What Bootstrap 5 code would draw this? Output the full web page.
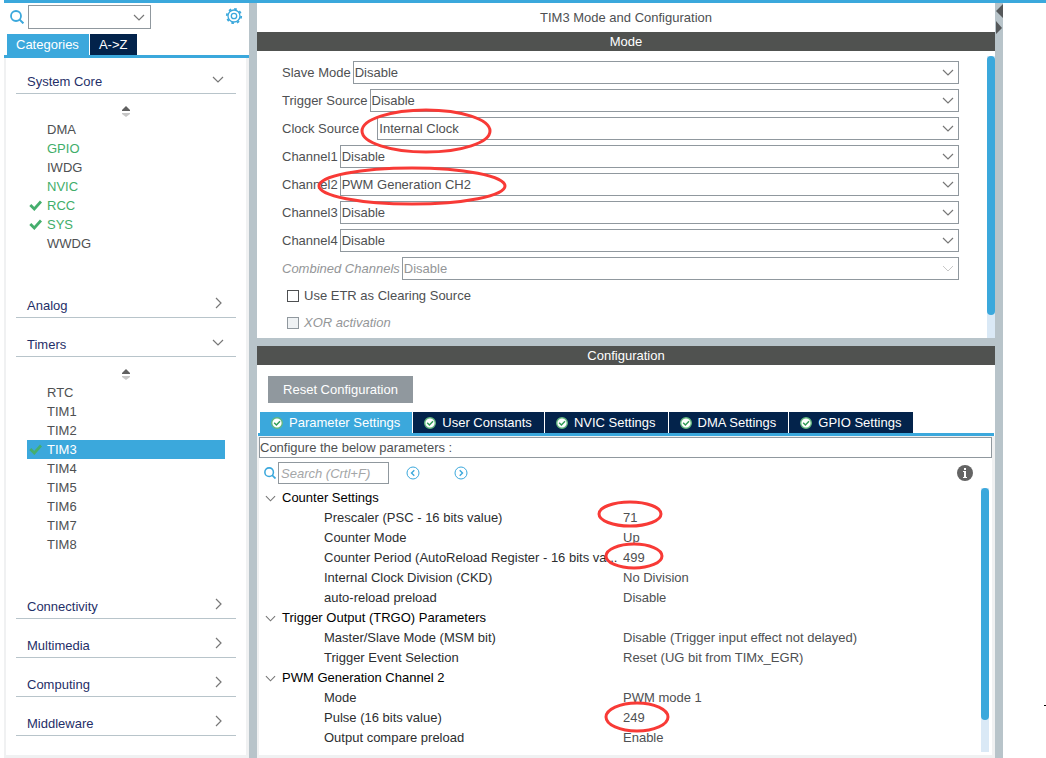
<!DOCTYPE html>
<html lang="en">
<head>
<meta charset="utf-8">
<meta name="viewport" content="width=device-width, initial-scale=1">
<title>TIM3 Mode and Configuration</title>
<link href="https://cdn.jsdelivr.net/npm/bootstrap@5.3.0/dist/css/bootstrap.min.css" rel="stylesheet">
<style>
  :root { --sky: #3ba8dc; --navy: #03234b; --steel: #b8c4ca; --edge: #90989e; --slate: #505250; --haze: #f0f1f2; }
  body { font-family: "Liberation Sans", Arial, sans-serif; font-size: 13px; line-height: 19px; color: #4e5052; background: #fff; }
  svg { display: block; flex: none; }
  .frame { margin-left: 4px; border-top: 3px solid var(--sky); }
  .sidebar { width: 245px; flex: none; }
  .splitter { width: 8px; flex: none; background: var(--steel); }
  .splitter-h { height: 8px; background: var(--steel); }
  .gutter { width: 43px; flex: none; }
  .gutter-mark { width: 2px; height: 1px; background: #000; margin-bottom: 52px; }

  .box, .form-select.box { border: 1px solid var(--edge); border-radius: 0; background-color: #fff; color: inherit; font-size: 13px; line-height: 19px; padding: 0 2px; min-width: 0; }
  .form-select.box { height: 23px; padding: 0 20px 0 1px; background-size: 12px 7px; background-position: right 4px center;
    background-image: url("data:image/svg+xml,%3Csvg xmlns='http://www.w3.org/2000/svg' viewBox='0 0 12 7'%3E%3Cpath d='M1 1l5 5 5-5' fill='none' stroke='%23777' stroke-width='1.2'/%3E%3C/svg%3E"); }
  .form-select.box:disabled { color: #949698; opacity: 1;
    background-image: url("data:image/svg+xml,%3Csvg xmlns='http://www.w3.org/2000/svg' viewBox='0 0 12 7'%3E%3Cpath d='M1 1l5 5 5-5' fill='none' stroke='%23c8c8c8'/%3E%3C/svg%3E"); }

  .finder { height: 31px; padding: 2px 6px 0 6px; }
  .finder .form-select.box { width: 123px; height: 24px; background-position: right 5px center; }
  .gear { margin-top: 2px; }
  .tabs { gap: 1px; border-bottom: 3px solid var(--sky); }
  .tabs .nav-link { height: 21px; padding: 1px 10px 0 9px; border-radius: 0; background: var(--navy); color: #fff; }
  .tabs .nav-link.active { background: var(--sky); color: #fff; }
  .side-tabs { padding-left: 3px; }
  .tree { border: solid var(--haze); border-width: 0 3px 3px 2px; padding: 0 10px 19px; }
  .group-head { display: flex; justify-content: space-between; align-items: flex-end; height: 39px; width: 100%; padding: 0 12px 2px 11px; border: 0; border-bottom: 1px solid var(--steel); background: none; color: #1f2f68; text-align: left; }
  .group-head.first { height: 36px; }
  .group-head svg { margin-bottom: 6px; }
  .group-head svg.open { margin-bottom: 8px; }
  .group-body { padding: 0 11px 26px; }
  .sorter { height: 26px; padding-top: 12px; }
  .entry { display: flex; align-items: center; height: 19px; color: inherit; text-decoration: none; }
  .entry .tick { width: 20px; padding-left: 2px; }
  .entry.ok { color: #3fae6a; }
  .entry.chosen { background: var(--sky); color: #fff; }

  .title-row { height: 29px; }
  .bar { height: 19px; background: var(--slate); color: #fff; text-align: center; }
  .mode-form { padding: 10px 28px 2px 25px; }
  .mode-row { display: flex; align-items: center; gap: 2px; height: 23px; margin-bottom: 5px; position: relative; }
  .mode-row label { white-space: nowrap; }
  .dim { color: #949698; font-style: italic; }
  .check-row { display: flex; align-items: center; gap: 5px; height: 27px; padding-left: 5px; }
  .form-check-input.tickbox { width: 12px; height: 12px; margin: 0; border: 1px solid #4e5052; border-radius: 0; background-color: #fff; }
  .form-check-input.tickbox:disabled { border-color: var(--edge); background-color: #eff2f4; opacity: 1; }
  .form-check-input.tickbox:disabled ~ label { opacity: 1; }
  .checks { margin-top: -3px; }
  .scroller { width: 8px; flex: none; background: #dae9f6; }
  .scroller div { background: var(--sky); border-radius: 4px; }
  .mode-scroll { margin-top: 5px; }
  .mode-scroll div { height: 92%; }
  .param-scroll { margin: 0 3px 3px 0; }
  .param-scroll div { height: 88%; }

  .reset { margin: 11px 0 9px 11px; width: 145px; height: 27px; border: 0; background: #90989e; color: #fff; }
  .config-tabs { margin: 0 1px; padding-left: 2px; }
  .config-tabs .nav-link { display: flex; align-items: center; gap: 6px; padding: 0 12px 0 11px; }
  .params { border: solid var(--haze); border-width: 1px 3px 3px 2px; }
  .caption-box { width: 100%; height: 21px; padding: 0; display: block; }
  .search-row { height: 30px; padding: 0 19px 0 5px; }
  .search-row .box { width: 111px; height: 22px; margin-left: 2px; }
  .box::placeholder { color: #a4a6a8; font-style: italic; opacity: 1; }
  .icon-btn { border: 0; padding: 0; background: none; }
  .ptable { table-layout: fixed; width: 100%; line-height: 20px; margin-bottom: 7px; }
  .ptable th, .ptable td { height: 20px; padding: 0; font-weight: 400; }
  .ptable .head th { color: #000; }
  .ptable .head span { display: flex; align-items: center; gap: 6px; padding-left: 6px; }
  .ptable .pname { padding: 0 0 0 65px; color: #2c2e30; white-space: nowrap; }
  .ptable td { position: relative; }
  .ring { position: absolute; z-index: 1; pointer-events: none; overflow: visible; }
  .ring ellipse { fill: none; stroke: #f83a36; stroke-width: 3; }
  .ring-clock { left: 79px; top: -8px; }
  .ring-pwm { left: 35px; top: -6px; }
  .ring-psc { left: -25px; top: -6px; }
  .ring-arr { left: -18px; top: -4px; }
  .ring-pulse { left: -19px; top: -5px; }
</style>
</head>
<body>
<svg class="d-none">
  <symbol id="down" viewBox="0 0 12 7"><path d="M1 1l5 5 5-5" fill="none" stroke="#777" stroke-width="1.200"/></symbol>
  <symbol id="right" viewBox="0 0 12 12"><path d="M4 1l5 5-5 5" fill="none" stroke="#777" stroke-width="1.200"/></symbol>
  <symbol id="sort" viewBox="0 0 10 11"><path d="M5 0l4 4v1H1V4z" fill="#606060"/><path d="M1 7h8v1L5 11 1 8z" fill="#c6c6c6"/></symbol>
  <symbol id="tick" viewBox="0 0 13 11"><path d="M1.300 5l4 4L12 1.500" fill="none" stroke="#45ae6d" stroke-width="2.800"/></symbol>
  <symbol id="lens" viewBox="0 0 14 14"><circle cx="6" cy="6" r="5" fill="none" stroke="#3ba8dc" stroke-width="1.800"/><path d="M9.400 9.400L13.400 13.400" stroke="#3ba8dc" stroke-width="2"/></symbol>
  <symbol id="good" viewBox="0 0 12 12"><circle cx="6" cy="6" r="5.300" fill="#fff" stroke="#63b77f" stroke-width="1.400"/><path d="M3.200 5.800l2.200 2.300 3.600-3.800" fill="none" stroke="#2f9b55" stroke-width="1.400"/></symbol>
</svg>

<div class="frame d-flex min-vh-100">
  <aside class="sidebar d-flex flex-column">
    <div class="finder d-flex align-items-start justify-content-between">
      <div class="d-flex align-items-center gap-1">
        <svg width="14" height="14"><use href="#lens"/></svg>
        <select class="form-select box" aria-label="Find peripheral"><option></option></select>
      </div>
      <button class="icon-btn gear" type="button" aria-label="Settings">
        <svg width="18" height="18" viewBox="0 0 18 18" fill="none" stroke="#3ba8dc"><circle cx="9" cy="9" r="2.700" stroke-width="1.300"/><circle cx="9" cy="9" r="6" stroke-width="1.300"/><circle cx="9" cy="9" r="7.200" stroke-width="1.800" stroke-dasharray="2.600 3.055"/></svg>
      </button>
    </div>
    <nav class="nav tabs side-tabs flex-nowrap">
      <a class="nav-link active" href="#">Categories</a>
      <a class="nav-link" href="#">A-&gt;Z</a>
    </nav>
    <div class="tree flex-grow-1">
      <button class="group-head first" type="button"><span>System Core</span><svg class="open" width="12" height="7"><use href="#down"/></svg></button>
      <div class="group-body">
        <div class="sorter d-flex justify-content-center"><svg width="10" height="11"><use href="#sort"/></svg></div>
        <a class="entry" href="#"><span class="tick"></span>DMA</a>
        <a class="entry ok" href="#"><span class="tick"></span>GPIO</a>
        <a class="entry" href="#"><span class="tick"></span>IWDG</a>
        <a class="entry ok" href="#"><span class="tick"></span>NVIC</a>
        <a class="entry ok" href="#"><span class="tick"><svg width="13" height="11"><use href="#tick"/></svg></span>RCC</a>
        <a class="entry ok" href="#"><span class="tick"><svg width="13" height="11"><use href="#tick"/></svg></span>SYS</a>
        <a class="entry" href="#"><span class="tick"></span>WWDG</a>
      </div>
      <button class="group-head" type="button"><span>Analog</span><svg width="12" height="12"><use href="#right"/></svg></button>
      <button class="group-head" type="button"><span>Timers</span><svg class="open" width="12" height="7"><use href="#down"/></svg></button>
      <div class="group-body">
        <div class="sorter d-flex justify-content-center"><svg width="10" height="11"><use href="#sort"/></svg></div>
        <a class="entry" href="#"><span class="tick"></span>RTC</a>
        <a class="entry" href="#"><span class="tick"></span>TIM1</a>
        <a class="entry" href="#"><span class="tick"></span>TIM2</a>
        <a class="entry chosen" href="#"><span class="tick"><svg width="13" height="11"><use href="#tick"/></svg></span>TIM3</a>
        <a class="entry" href="#"><span class="tick"></span>TIM4</a>
        <a class="entry" href="#"><span class="tick"></span>TIM5</a>
        <a class="entry" href="#"><span class="tick"></span>TIM6</a>
        <a class="entry" href="#"><span class="tick"></span>TIM7</a>
        <a class="entry" href="#"><span class="tick"></span>TIM8</a>
      </div>
      <button class="group-head" type="button"><span>Connectivity</span><svg width="12" height="12"><use href="#right"/></svg></button>
      <button class="group-head" type="button"><span>Multimedia</span><svg width="12" height="12"><use href="#right"/></svg></button>
      <button class="group-head" type="button"><span>Computing</span><svg width="12" height="12"><use href="#right"/></svg></button>
      <button class="group-head" type="button"><span>Middleware</span><svg width="12" height="12"><use href="#right"/></svg></button>
    </div>
  </aside>

  <div class="splitter"></div>

  <main class="d-flex flex-column flex-grow-1">
    <div class="title-row d-flex align-items-center justify-content-center">TIM3 Mode and Configuration</div>
    <div class="bar">Mode</div>
    <section class="d-flex">
      <form class="mode-form flex-grow-1">
        <div class="mode-row"><label for="slave">Slave Mode</label><select id="slave" class="form-select box"><option>Disable</option></select></div>
        <div class="mode-row"><label for="trigger">Trigger Source</label><select id="trigger" class="form-select box"><option>Disable</option></select></div>
        <div class="mode-row"><label for="clock" class="pe-3">Clock Source</label><select id="clock" class="form-select box"><option>Internal Clock</option></select>
          <svg class="ring ring-clock" width="130" height="45"><ellipse cx="65" cy="22" rx="64" ry="21"/></svg></div>
        <div class="mode-row"><label for="ch1">Channel1</label><select id="ch1" class="form-select box"><option>Disable</option></select></div>
        <div class="mode-row"><label for="ch2">Channel2</label><select id="ch2" class="form-select box"><option>PWM Generation CH2</option></select>
          <svg class="ring ring-pwm" width="189" height="38"><ellipse cx="95" cy="19" rx="93" ry="18"/></svg></div>
        <div class="mode-row"><label for="ch3">Channel3</label><select id="ch3" class="form-select box"><option>Disable</option></select></div>
        <div class="mode-row"><label for="ch4">Channel4</label><select id="ch4" class="form-select box"><option>Disable</option></select></div>
        <div class="mode-row"><label for="combined" class="dim">Combined Channels</label><select id="combined" class="form-select box" disabled><option>Disable</option></select></div>
        <div class="checks">
          <div class="check-row"><input class="form-check-input tickbox" type="checkbox" id="etr"><label for="etr">Use ETR as Clearing Source</label></div>
          <div class="check-row"><input class="form-check-input tickbox" type="checkbox" id="xor" disabled><label for="xor" class="dim">XOR activation</label></div>
        </div>
      </form>
      <div class="scroller mode-scroll"><div></div></div>
    </section>

    <div class="splitter-h"></div>
    <div class="bar">Configuration</div>
    <section class="d-flex flex-column flex-grow-1">
      <div class="d-flex"><button class="reset" type="button">Reset Configuration</button></div>
      <nav class="nav tabs config-tabs flex-nowrap">
        <a class="nav-link active" href="#"><svg width="12" height="12"><use href="#good"/></svg>Parameter Settings</a>
        <a class="nav-link" href="#"><svg width="12" height="12"><use href="#good"/></svg>User Constants</a>
        <a class="nav-link" href="#"><svg width="12" height="12"><use href="#good"/></svg>NVIC Settings</a>
        <a class="nav-link" href="#"><svg width="12" height="12"><use href="#good"/></svg>DMA Settings</a>
        <a class="nav-link" href="#"><svg width="12" height="12"><use href="#good"/></svg>GPIO Settings</a>
      </nav>
      <div class="params d-flex flex-column flex-grow-1">
        <input class="box caption-box" type="text" value="Configure the below parameters :" aria-label="Instructions" readonly>
        <div class="search-row d-flex align-items-center">
          <svg width="12" height="12" viewBox="0 0 14 14"><use href="#lens" width="14" height="14"/></svg>
          <input class="box" type="search" placeholder="Search (Crtl+F)" aria-label="Search parameters">
          <button class="icon-btn ms-3" type="button" aria-label="Previous"><svg width="16" height="16" fill="none" stroke="#3ba8dc"><circle cx="8" cy="8" r="6"/><path d="M9.300 5.200L6.500 8l2.800 2.800" stroke-width="1.400"/></svg></button>
          <button class="icon-btn ms-3 ps-3" type="button" aria-label="Next"><svg width="16" height="16" fill="none" stroke="#3ba8dc"><circle cx="8" cy="8" r="6"/><path d="M6.700 5.200L9.500 8l-2.800 2.800" stroke-width="1.400"/></svg></button>
          <button class="icon-btn ms-auto" type="button" aria-label="Information"><svg width="16" height="16"><circle cx="8" cy="8" r="8" fill="#646464"/><path d="M7 3h2v2H7zM6 6h3v6h1v1H6v-1h1V7H6z" fill="#fff"/></svg></button>
        </div>
        <div class="d-flex flex-grow-1">
          <div class="flex-grow-1">
            <table class="ptable">
              <colgroup><col style="width:364px"><col></colgroup>
              <tbody>
                <tr class="head"><th colspan="2"><span><svg width="11" height="7"><use href="#down"/></svg>Counter Settings</span></th></tr>
                <tr><th class="pname">Prescaler (PSC - 16 bits value)</th><td>71<svg class="ring ring-psc" width="65" height="25"><ellipse cx="32" cy="12" rx="31" ry="12"/></svg></td></tr>
                <tr><th class="pname">Counter Mode</th><td>Up</td></tr>
                <tr><th class="pname">Counter Period (AutoReload Register - 16 bits va...</th><td>499<svg class="ring ring-arr" width="58" height="25"><ellipse cx="29" cy="12" rx="28" ry="12"/></svg></td></tr>
                <tr><th class="pname">Internal Clock Division (CKD)</th><td>No Division</td></tr>
                <tr><th class="pname">auto-reload preload</th><td>Disable</td></tr>
                <tr class="head"><th colspan="2"><span><svg width="11" height="7"><use href="#down"/></svg>Trigger Output (TRGO) Parameters</span></th></tr>
                <tr><th class="pname">Master/Slave Mode (MSM bit)</th><td>Disable (Trigger input effect not delayed)</td></tr>
                <tr><th class="pname">Trigger Event Selection</th><td>Reset (UG bit from TIMx_EGR)</td></tr>
                <tr class="head"><th colspan="2"><span><svg width="11" height="7"><use href="#down"/></svg>PWM Generation Channel 2</span></th></tr>
                <tr><th class="pname">Mode</th><td>PWM mode 1</td></tr>
                <tr><th class="pname">Pulse (16 bits value)</th><td>249<svg class="ring ring-pulse" width="65" height="29"><ellipse cx="33" cy="14" rx="31" ry="14"/></svg></td></tr>
                <tr><th class="pname">Output compare preload</th><td>Enable</td></tr>
              </tbody>
            </table>
          </div>
          <div class="scroller param-scroll"><div></div></div>
        </div>
      </div>
    </section>
  </main>

  <div class="splitter"><svg width="8" height="34" fill="#55585a"><path d="M8 1v14L1 8zM1 18v13l6-6z"/></svg></div>
  <div class="gutter d-flex flex-column justify-content-end align-items-end"><div class="gutter-mark"></div></div>
</div>
<script src="https://cdn.jsdelivr.net/npm/bootstrap@5.3.0/dist/js/bootstrap.bundle.min.js"></script>
</body>
</html>
